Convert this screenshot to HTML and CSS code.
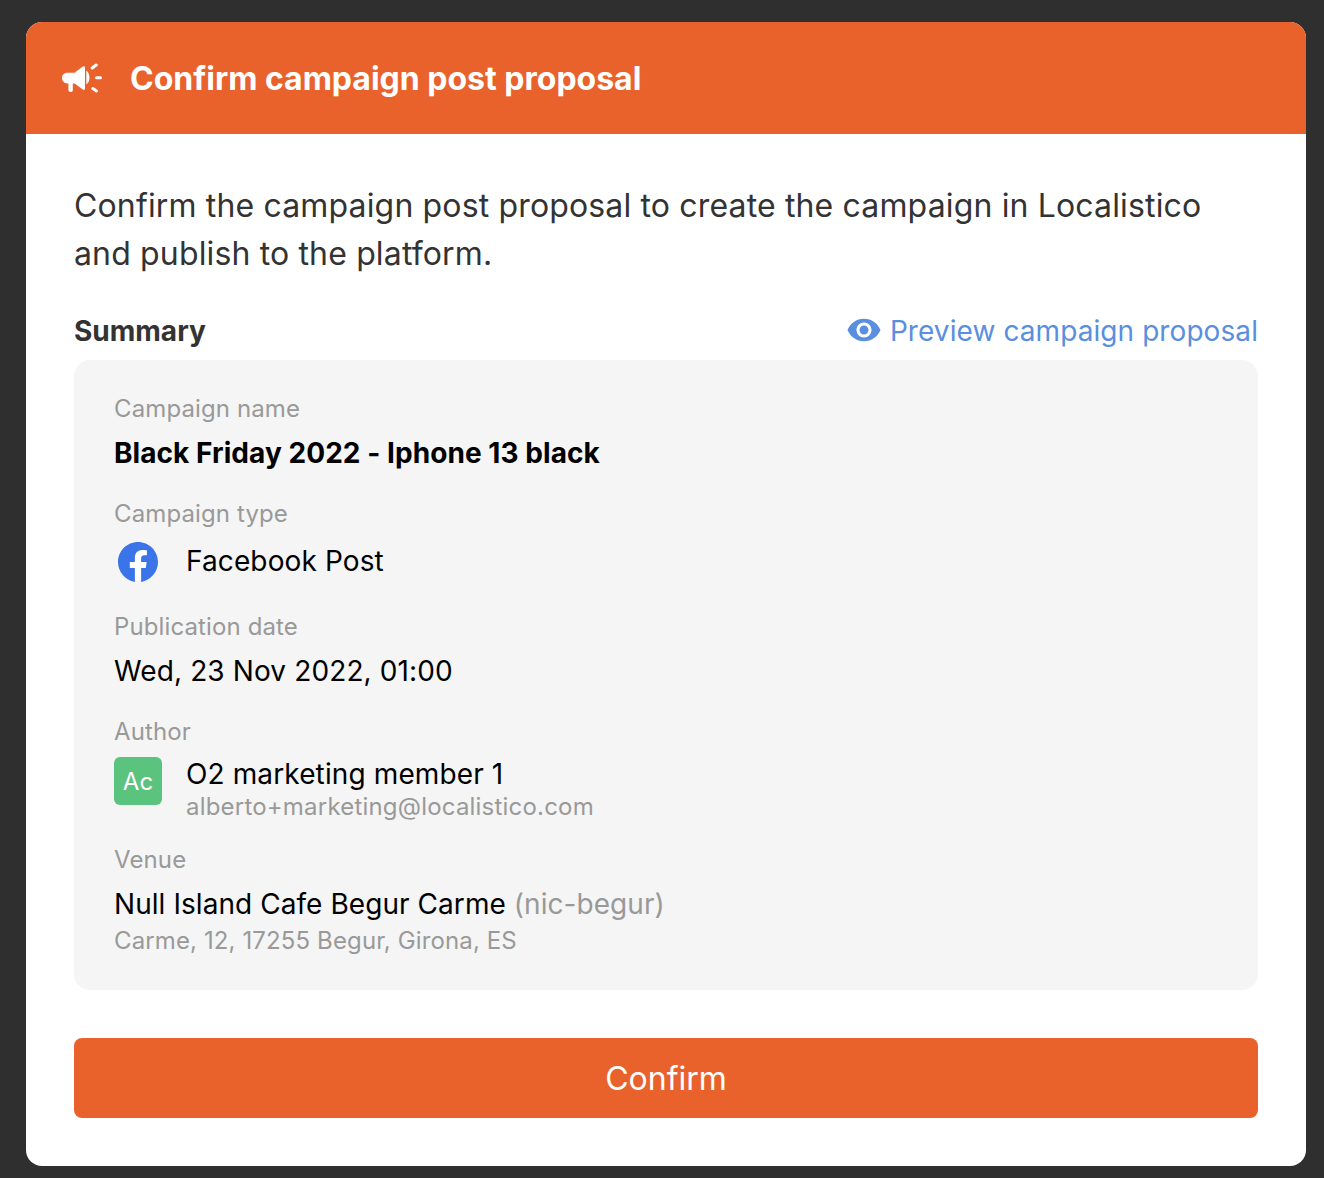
FILE: index.html
```html
<!DOCTYPE html>
<html lang="en">
<head>
    <meta charset="UTF-8">
    <title>Confirm campaign post proposal</title>
    <link rel="stylesheet" href="styles.css">
</head>
<body>
    <div class="modal">
        <div class="modal-header">
            <svg class="header-icon" viewBox="0 0 40 30" fill="#fff">
                <path d="M5.300 9.700H12.500L20.800 3.600C21.800 2.900 23 3.400 23 4.600V25.600C23 26.800 21.800 27.300 20.800 26.600L12.500 20.400H10.800V27.300C10.800 28.200 10 28.900 8.800 28.900S6.400 28.200 6.400 27.300V20.400H5.300C2.300 20.400 0 18 0 15S2.300 9.700 5.300 9.700Z"/>
                <path d="M24.300 7.800C26.400 8.700 27.400 11.800 27.400 14.700S26.400 20.300 24.300 21.200Z"/>
                <g stroke="#fff" stroke-width="3" stroke-linecap="round" fill="none">
                    <path d="M30.200 5l4-3"/>
                    <path d="M34.500 14.700h4"/>
                    <path d="M30.800 25.500l3.700 2.400"/>
                </g>
            </svg>
            <span class="modal-title">Confirm campaign post proposal</span>
        </div>
        <div class="modal-body">
            <p class="intro">Confirm the campaign post proposal to create the campaign in Localistico and publish to the platform.</p>
            <div class="summary-head">
                <span class="summary-title">Summary</span>
                <a class="preview-link">
                    <svg class="eye-icon" viewBox="0 0 24 24" fill="#5a8ede">
                        <path fill-rule="evenodd" d="M12 4.500C7 4.500 2.730 7.610 1 12c1.730 4.390 6 7.500 11 7.500s9.270-3.110 11-7.500c-1.730-4.390-6-7.500-11-7.500zM12 17c-2.760 0-5-2.240-5-5s2.240-5 5-5 5 2.240 5 5-2.240 5-5 5zm0-8c-1.660 0-3 1.340-3 3s1.340 3 3 3 3-1.340 3-3-1.340-3-3-3z"/>
                    </svg>
                    Preview campaign proposal
                </a>
            </div>
            <div class="summary">
                <div class="field">
                    <div class="label">Campaign name</div>
                    <div class="value strong">Black Friday 2022 - Iphone 13 black</div>
                </div>
                <div class="field">
                    <div class="label">Campaign type</div>
                    <div class="media media-center">
                        <div class="media-icon">
                            <svg class="fb-icon" viewBox="0 0 24 24">
                                <circle cx="12" cy="12" r="11" fill="#fff"/>
                                <path fill="#3b73e8" d="M24 12.073c0-6.627-5.373-12-12-12s-12 5.373-12 12c0 5.990 4.388 10.954 10.125 11.854v-8.385H7.078v-3.470h3.047V9.430c0-3.007 1.792-4.669 4.533-4.669 1.312 0 2.686.235 2.686.235v2.953H15.830c-1.491 0-1.956.925-1.956 1.874v2.250h3.328l-.532 3.470h-2.796v8.385C19.612 23.027 24 18.062 24 12.073z"/>
                            </svg>
                        </div>
                        <div class="value">Facebook Post</div>
                    </div>
                </div>
                <div class="field">
                    <div class="label">Publication date</div>
                    <div class="value">Wed, 23 Nov 2022, 01:00</div>
                </div>
                <div class="field">
                    <div class="label">Author</div>
                    <div class="media">
                        <div class="avatar">Ac</div>
                        <div>
                            <div class="value tight">O2 marketing member 1</div>
                            <div class="sub email">alberto+marketing@localistico.com</div>
                        </div>
                    </div>
                </div>
                <div class="field">
                    <div class="label">Venue</div>
                    <div class="value venue">Null Island Cafe Begur Carme <span class="muted">(nic-begur)</span></div>
                    <div class="sub address">Carme, 12, 17255 Begur, Girona, ES</div>
                </div>
            </div>
            <button class="confirm-btn">Confirm</button>
        </div>
    </div>
</body>
</html>
```

FILE: styles.css
```css
body {
    margin: 0;
    padding: 22px 18px 12px 26px;
    background: #2f2f2f;
    font-family: Inter, sans-serif;
    color: #333;
}
.modal {
    background: #fff;
    border-radius: 16px;
    overflow: hidden;
}
.modal-header {
    display: flex;
    align-items: center;
    gap: 28px;
    height: 112px;
    padding-left: 36px;
    background: #ea622b;
    color: #fff;
}
.header-icon {
    width: 40px;
    height: 30px;
}
.modal-title {
    font-size: 32px;
    font-weight: 700;
}
.modal-body {
    padding: 48px;
}
.intro {
    margin: 0 0 33px;
    font-size: 32px;
    line-height: 48px;
    letter-spacing: 0.15px;
}
.summary-head {
    display: flex;
    justify-content: space-between;
    align-items: center;
    height: 40px;
    margin-bottom: 9px;
    font-size: 28px;
}
.summary-title {
    font-weight: 700;
}
.preview-link {
    display: flex;
    align-items: center;
    gap: 8px;
    color: #5a8ede;
    letter-spacing: 0.08px;
}
.eye-icon {
    width: 36px;
    height: 36px;
    margin-top: -3px;
}
.summary {
    display: flex;
    flex-direction: column;
    gap: 25px;
    padding: 33px 40px;
    margin-bottom: 48px;
    background: #f5f5f5;
    border-radius: 16px;
}
.label {
    margin-bottom: 8px;
    font-size: 24px;
    line-height: 32px;
    color: #999;
    letter-spacing: 0.12px;
}
.value {
    font-size: 28px;
    line-height: 40px;
    color: #000;
    letter-spacing: 0.12px;
}
.value.strong {
    font-weight: 700;
    letter-spacing: 0.06px;
}
.value.tight {
    line-height: 36px;
}
.value.venue {
    letter-spacing: 0.06px;
}
.muted {
    color: #999;
}
.sub {
    font-size: 24px;
    line-height: 32px;
    color: #999;
}
.sub.email {
    margin-top: 3px;
    line-height: 24px;
    letter-spacing: 0.2px;
}
.sub.address {
    margin-top: 1px;
    letter-spacing: 0.12px;
}
.media {
    display: flex;
    gap: 24px;
}
.media-center {
    align-items: center;
}
.media-center .value {
    margin-bottom: 3px;
}
.media-icon {
    display: flex;
    justify-content: center;
    align-items: center;
    width: 48px;
    height: 48px;
}
.fb-icon {
    width: 40px;
    height: 40px;
}
.avatar {
    display: flex;
    justify-content: center;
    align-items: center;
    width: 48px;
    height: 48px;
    margin-top: 1px;
    background: #5ac47f;
    border-radius: 6px;
    color: #fff;
    font-size: 24px;
}
.confirm-btn {
    display: block;
    width: 100%;
    height: 80px;
    background: #ea622b;
    color: #fff;
    border: none;
    border-radius: 8px;
    font-family: inherit;
    font-size: 32px;
}
```
